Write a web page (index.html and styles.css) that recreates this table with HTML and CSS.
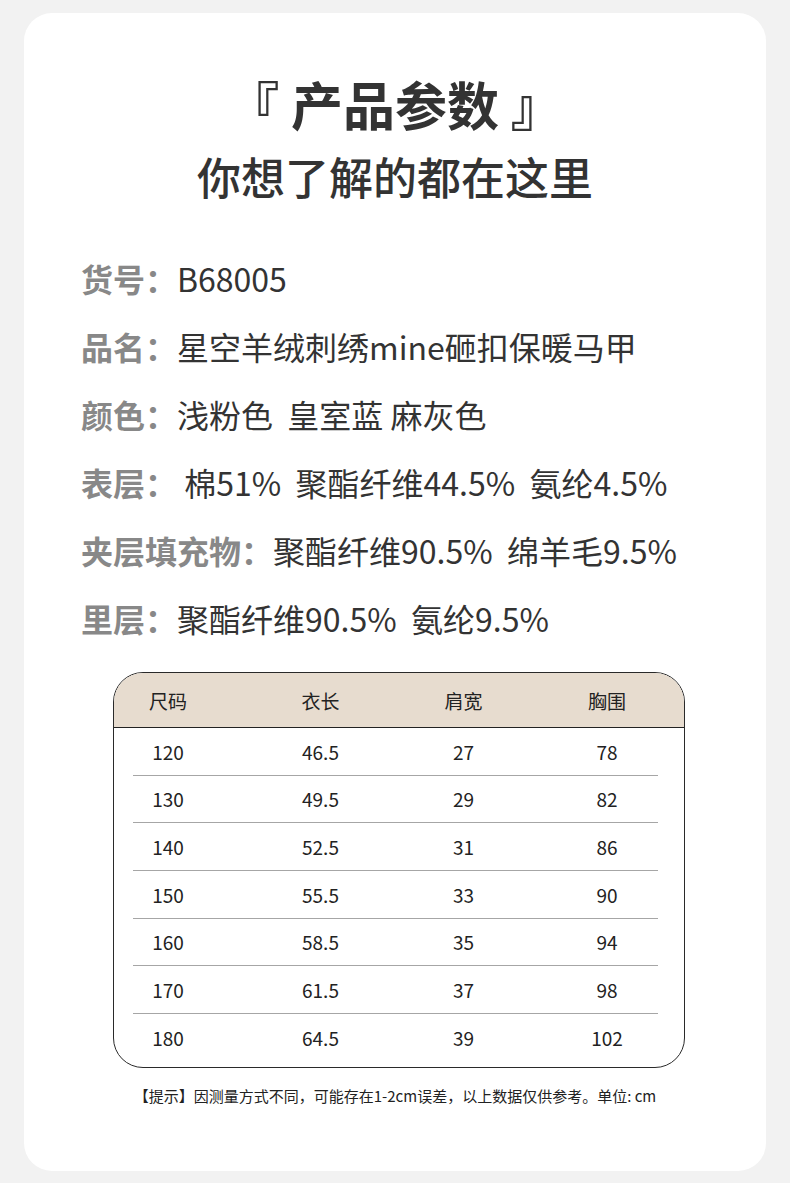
FILE: index.html
```html
<!DOCTYPE html>
<html lang="zh-CN">
<head>
<meta charset="utf-8">
<title>产品参数</title>
<link rel="stylesheet" href="styles.css">
</head>
<body>
<div class="card">
  <h1 class="title">『 产品参数 』</h1>
  <h2 class="subtitle">你想了解的都在这里</h2>

  <div class="params">
    <div class="param"><span class="label">货号：</span><span class="value">B68005</span></div>
    <div class="param"><span class="label">品名：</span><span class="value">星空羊绒刺绣mine砸扣保暖马甲</span></div>
    <div class="param"><span class="label">颜色：</span><span class="value">浅粉色  皇室蓝 麻灰色</span></div>
    <div class="param"><span class="label">表层：</span><span class="value"> 棉51%  聚酯纤维44.5%  氨纶4.5%</span></div>
    <div class="param"><span class="label">夹层填充物：</span><span class="value">聚酯纤维90.5%  绵羊毛9.5%</span></div>
    <div class="param"><span class="label">里层：</span><span class="value">聚酯纤维90.5%  氨纶9.5%</span></div>
  </div>

  <div class="size-table">
    <div class="thead">
      <div class="row">
        <span>尺码</span><span>衣长</span><span>肩宽</span><span>胸围</span>
      </div>
    </div>
    <div class="tbody">
      <div class="row"><span>120</span><span>46.5</span><span>27</span><span>78</span></div>
      <div class="row"><span>130</span><span>49.5</span><span>29</span><span>82</span></div>
      <div class="row"><span>140</span><span>52.5</span><span>31</span><span>86</span></div>
      <div class="row"><span>150</span><span>55.5</span><span>33</span><span>90</span></div>
      <div class="row"><span>160</span><span>58.5</span><span>35</span><span>94</span></div>
      <div class="row"><span>170</span><span>61.5</span><span>37</span><span>98</span></div>
      <div class="row"><span>180</span><span>64.5</span><span>39</span><span>102</span></div>
    </div>
  </div>

  <p class="note">【提示】因测量方式不同，可能存在1-2cm误差，以上数据仅供参考。单位: cm</p>
</div>
</body>
</html>
```

FILE: styles.css
```css
* { box-sizing: border-box; }

html, body {
  margin: 0;
  padding: 0;
  background: #f2f2f2;
}

body {
  font-family: "Noto Sans CJK SC", "Noto Sans", sans-serif;
  color: #333;
  padding: 13px 24px 12px;
}

.card {
  background: #fff;
  border-radius: 28px;
  height: 1158px;
  padding-top: 61px;
}

.title {
  margin: 0;
  text-align: center;
  font-size: 52px;
  font-weight: 700;
  line-height: 60px;
  color: #333;
  white-space: pre;
}

.subtitle {
  margin: 14px 0 0;
  text-align: center;
  font-size: 44px;
  font-weight: 500;
  line-height: 56px;
  color: #333;
}

.params {
  margin-top: 40px;
  padding-left: 57px;
}

.param {
  display: flex;
  height: 68px;
  align-items: center;
  font-size: 32px;
  line-height: 68px;
  white-space: pre;
}

.label {
  color: #888;
  font-weight: 700;
}

.value {
  color: #333;
  font-weight: 400;
}

.size-table {
  margin: 20px 0 0 89px;
  width: 572px;
  border: 1px solid #2a2a2a;
  border-radius: 30px;
  overflow: hidden;
  color: #222;
  font-size: 19px;
}

.thead {
  background: #e7dccf;
  border-bottom: 1px solid #222;
  height: 55px;
  display: flex;
  align-items: center;
}

.thead .row {
  flex: 1;
}

.row {
  display: grid;
  grid-template-columns: 116px 1fr 1fr 123px;
  margin: 0 26px 0 19px;
  align-items: center;
  text-align: center;
}

.row span:first-child {
  padding-right: 46px;
}

.row span:last-child {
  padding-left: 21px;
}

.tbody {
  padding-bottom: 5px;
}

.tbody .row {
  height: 47.67px;
  border-bottom: 1px solid #a6a6a6;
}

.tbody .row:last-child {
  border-bottom: none;
}

.note {
  margin: 18px 0 0;
  text-align: center;
  font-size: 15px;
  line-height: 20px;
  color: #222;
}
```
